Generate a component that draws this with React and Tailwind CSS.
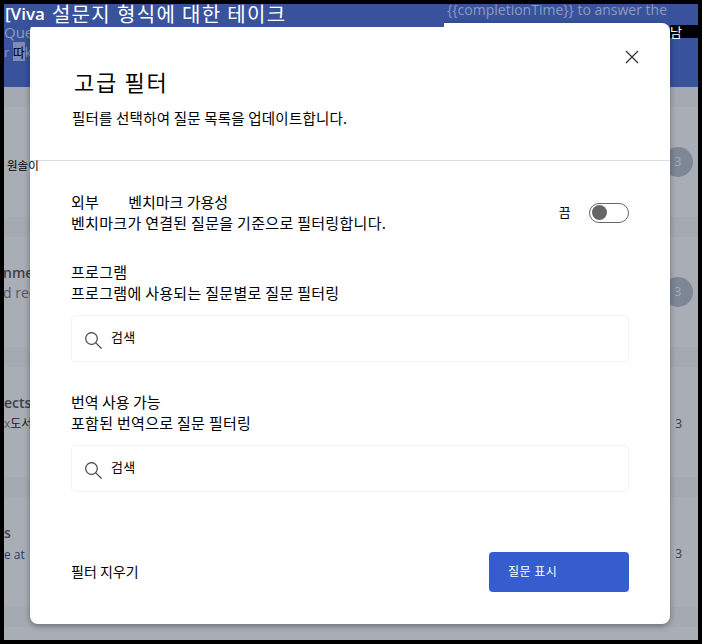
const KR = "font-['Noto_Sans_CJK_KR','Noto_Sans',sans-serif]";

function SearchField() {
  return (
    <div className="flex h-[47px] w-[558px] items-center rounded-[4px] border border-[#f3f3f3] bg-white pl-[12px]">
      <svg width="19" height="19" viewBox="0 0 19 19" fill="none" stroke="#444" strokeWidth="1.2" className="mt-[3px]">
        <circle cx="7.5" cy="7.5" r="5.8" />
        <path d="M11.8 11.8 17.5 17.5" />
      </svg>
      <span className="ml-[8px] mb-[5px] text-[13px] leading-none text-black">검색</span>
    </div>
  );
}

function Row({ top, sub, count, badge, mt }) {
  return (
    <>
      <div className="relative h-[110px] shrink-0">
        <div className={`${mt} flex flex-col whitespace-nowrap leading-[20px]`}>
          {top}
          {sub}
        </div>
        {badge ? (
          <div className="absolute right-[5px] top-[40px] flex h-[30px] w-[30px] items-center justify-center rounded-full bg-[#7d8795] text-[12px] text-[#a4a9b4]">
            {count}
          </div>
        ) : (
          <div className="absolute right-[16px] top-[48px] text-[12px] text-[#3a3d44]">{count}</div>
        )}
      </div>
      <div className="h-[20px] shrink-0 bg-[#a5a9b1]" />
    </>
  );
}

function Backdrop() {
  return (
    <div className="flex h-full flex-col overflow-hidden bg-[#a9adb5] font-['Open_Sans',sans-serif]">
      <div className="relative h-[83px] shrink-0 overflow-hidden bg-[#38529b]">
        <div className="mt-[21px] text-[15px] leading-[14px] text-[#8e9abd]">Que</div>
        <div className="mt-[3px] text-[13px] leading-[20px] text-[#8e9abd]">
          r <span className={`${KR} bg-[#7d8cb5] text-black`}>따</span>k
        </div>
        <div className="absolute right-[31px] top-0 text-[14px] leading-[12px] text-[#8e9abd]">
          {"{{completionTime}} to answer the"}
        </div>
      </div>
      <div className="h-[20px] shrink-0 bg-[#a5a9b1]" />
      <Row count="3" badge mt="mt-[43px]" />
      <Row
        top={<span className="-ml-[1px] text-[14px] font-semibold text-[#3e4148]">nme</span>}
        sub={<span className="-ml-[1px] text-[14px] text-[#55585f]">d rec</span>}
        count="3"
        badge
        mt="mt-[26px]"
      />
      <Row
        top={<span className="text-[14px] font-semibold text-[#3e4148]">ects</span>}
        sub={<span className="text-[12px] text-[#55585f]">x<span className={`${KR} text-[#222]`}>도서</span></span>}
        count="3"
        mt="mt-[26px]"
      />
      <Row
        top={<span className="text-[14px] font-semibold text-[#3e4148]">s</span>}
        sub={<span className="mt-[2px] text-[12px] font-medium text-[#2b3a63]">e at</span>}
        count="3"
        mt="mt-[26px]"
      />
    </div>
  );
}

export default function App() {
  return (
    <div className="relative h-[644px] w-[702px] overflow-hidden bg-black p-[4px]">
      <Backdrop />

      {/* modal */}
      <div className={`${KR} absolute left-[30px] top-[23px] flex h-[601px] w-[640px] flex-col rounded-[8px] bg-white text-black shadow-[0_2px_6px_rgba(0,0,0,0.35)]`}>
        <button className="absolute right-[31px] top-[27px] text-[#333]" type="button">
          <svg width="14" height="14" viewBox="0 0 14 14" fill="none" stroke="currentColor" strokeWidth="1.3">
            <path d="M1 1 13 13M13 1 1 13" />
          </svg>
        </button>

        <div className="h-[138px] shrink-0 border-b border-[#d5dde8] pl-[42px] pt-[44px]">
          <h2 className="ml-[2px] text-[22px] font-normal leading-[28px] tracking-[1.7px]">고급 필터</h2>
          <p className="mt-[13px] text-[14.5px] tracking-[0.2px] leading-[20px]">필터를 선택하여 질문 목록을 업데이트합니다.</p>
        </div>

        <div className="flex flex-1 flex-col px-[41px] text-[15px] tracking-[0.3px]">
          <div className="mt-[30px] flex items-start justify-between">
            <div className="leading-[21px]">
              <div>
                외부<span className="ml-[29px] tracking-[0px]">벤치마크 가용성</span>
              </div>
              <div>벤치마크가 연결된 질문을 기준으로 필터링합니다.</div>
            </div>
            <div className="mt-[11px] flex items-center">
              <span className="mb-[2px] text-[13px]">끔</span>
              <div className="ml-[18px] flex h-[20px] w-[40px] items-center rounded-full border border-[#666] pl-[2px]">
                <div className="h-[15px] w-[15px] rounded-full bg-[#666]" />
              </div>
            </div>
          </div>

          <div className="mt-[28px] leading-[21px]">
            <div>프로그램</div>
            <div>프로그램에 사용되는 질문별로 질문 필터링</div>
          </div>
          <div className="mt-[12px]">
            <SearchField />
          </div>

          <div className="mt-[29px] leading-[21px]">
            <div className="tracking-[0px]">번역 사용 가능</div>
            <div>포함된 번역으로 질문 필터링</div>
          </div>
          <div className="mt-[12px]">
            <SearchField />
          </div>

          <div className="mt-[60px] flex items-center justify-between">
            <span className="mb-[2px] text-[14px] tracking-[0px]">필터 지우기</span>
            <button type="button" className="flex h-[40px] w-[140px] items-center rounded-[4px] bg-[#365dcd] pb-[2px] pl-[19px] text-[12px] tracking-[0.5px] text-white">
              질문 표시
            </button>
          </div>
        </div>
      </div>

      {/* bits of the page that paint over the dialog */}
      <div className="absolute left-[30px] top-[4px] h-[23px] w-[414px] bg-[#38529b]" aria-hidden="true" />
      <div className={`${KR} absolute left-[5px] top-[4px] flex h-[20px] items-center whitespace-nowrap text-[20px] leading-[20px] text-white`}>
        <span className="font-['Open_Sans',sans-serif] text-[17px] font-semibold">[Viva</span>
        <span className="ml-[7px] tracking-[1.35px]">설문지 형식에 대한 테이크</span>
      </div>
      <div className={`${KR} absolute left-[670px] top-[25px] flex h-[13px] w-[28px] items-center bg-black text-[13px] leading-none text-white`}>남</div>
      <div className={`${KR} absolute left-[7px] top-[155px] text-[11.5px] leading-[20px] text-black`}>원솔이</div>
    </div>
  );
}
